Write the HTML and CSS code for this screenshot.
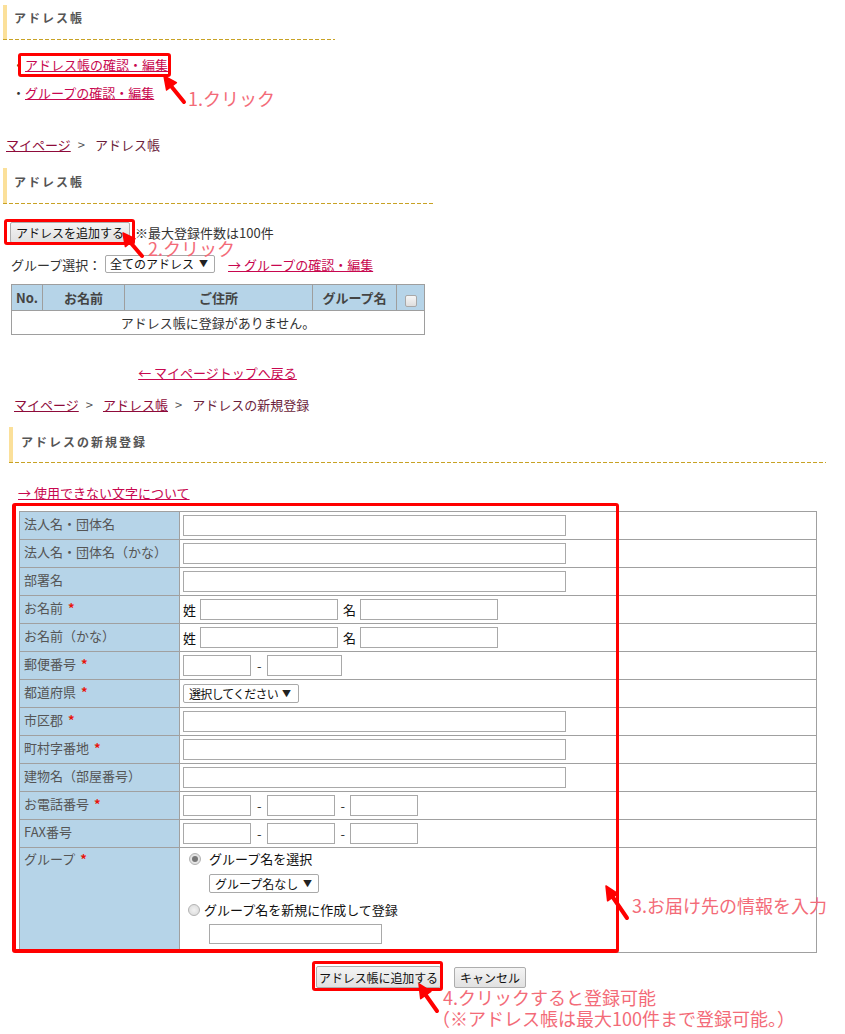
FILE: index.html
```html
<!DOCTYPE html>
<html lang="ja">
<head>
<meta charset="utf-8">
<title>アドレス帳</title>
<link rel="stylesheet" href="styles.css">
</head>
<body>
<div class="page">

  <section class="sec sec1">
    <div class="hd hd1"><h2>アドレス帳</h2></div>
    <ul class="menu">
      <li>・<a href="#">アドレス帳の確認・編集</a></li>
      <li>・<a href="#">グループの確認・編集</a></li>
    </ul>
    <p class="crumb crumb1"><a class="dk" href="#">マイページ</a><span class="sep">&gt;</span>アドレス帳</p>
  </section>

  <section class="sec sec2">
    <div class="hd hd2"><h2>アドレス帳</h2></div>
    <div class="addrow">
      <button class="btn btn-add" type="button">アドレスを追加する</button>
      <span class="note">※最大登録件数は100件</span>
    </div>
    <div class="grprow">
      <span class="grplabel">グループ選択：</span>
      <span class="sel sel-all"><span class="sel-txt">全てのアドレス</span><span class="sel-arr">▼</span></span>
      <a href="#" class="grplink">→ グループの確認・編集</a>
    </div>
    <table class="list">
      <colgroup><col class="c1"><col class="c2"><col class="c3"><col class="c4"><col class="c5"></colgroup>
      <thead>
        <tr><th class="th-no">No.</th><th>お名前</th><th>ご住所</th><th>グループ名</th><th><span class="chk"></span></th></tr>
      </thead>
      <tbody>
        <tr><td colspan="5" class="empty">アドレス帳に登録がありません。</td></tr>
      </tbody>
    </table>
    <p class="back"><a href="#">← マイページトップへ戻る</a></p>
  </section>

  <section class="sec sec3">
    <p class="crumb crumb2"><a class="dk" href="#">マイページ</a><span class="sep">&gt;</span><a class="dk" href="#">アドレス帳</a><span class="sep">&gt;</span>アドレスの新規登録</p>
    <div class="hd hd3"><h2>アドレスの新規登録</h2></div>
    <p class="charlink"><a href="#">→ 使用できない文字について</a></p>

    <table class="form">
      <colgroup><col class="lc"><col></colgroup>
      <tr><th>法人名・団体名</th><td><input class="in long" type="text"></td></tr>
      <tr><th>法人名・団体名（かな）</th><td><input class="in long" type="text"></td></tr>
      <tr><th>部署名</th><td><input class="in long" type="text"></td></tr>
      <tr><th>お名前 <span class="req">*</span></th><td><span class="lbl">姓</span><input class="in name" type="text"><span class="lbl lbl2">名</span><input class="in name" type="text"></td></tr>
      <tr><th>お名前（かな）</th><td><span class="lbl">姓</span><input class="in name" type="text"><span class="lbl lbl2">名</span><input class="in name" type="text"></td></tr>
      <tr><th>郵便番号 <span class="req">*</span></th><td><input class="in zip1" type="text"><span class="dash">-</span><input class="in zip2" type="text"></td></tr>
      <tr><th>都道府県 <span class="req">*</span></th><td><span class="sel sel-pref"><span class="sel-txt">選択してください</span><span class="sel-arr">▼</span></span></td></tr>
      <tr><th>市区郡 <span class="req">*</span></th><td><input class="in long" type="text"></td></tr>
      <tr><th>町村字番地 <span class="req">*</span></th><td><input class="in long" type="text"></td></tr>
      <tr><th>建物名（部屋番号）</th><td><input class="in long" type="text"></td></tr>
      <tr><th>お電話番号 <span class="req">*</span></th><td><input class="in tel" type="text"><span class="dash">-</span><input class="in tel" type="text"><span class="dash">-</span><input class="in tel" type="text"></td></tr>
      <tr><th>FAX番号</th><td><input class="in tel" type="text"><span class="dash">-</span><input class="in tel" type="text"><span class="dash">-</span><input class="in tel" type="text"></td></tr>
      <tr class="grp"><th>グループ <span class="req">*</span></th>
        <td>
          <div class="gline"><span class="radio on"></span>グループ名を選択</div>
          <span class="sel sel-grp"><span class="sel-txt">グループ名なし</span><span class="sel-arr">▼</span></span>
          <div class="gline gline2"><span class="radio"></span>グループ名を新規に作成して登録</div>
          <input class="in gname" type="text">
        </td>
      </tr>
    </table>

    <div class="actions">
      <button class="btn btn-submit" type="button">アドレス帳に追加する</button>
      <button class="btn btn-cancel" type="button">キャンセル</button>
    </div>
  </section>

  <!-- annotations overlay -->
  <div class="box box1"></div>
  <div class="box box2"></div>
  <div class="box box3"></div>
  <div class="box box4"></div>

  <span class="anno anno1">1.クリック</span>
  <span class="anno anno2">2.クリック</span>
  <span class="anno anno3">3.お届け先の情報を入力</span>
  <span class="anno anno4">4.クリックすると登録可能<br><span class="anno4b">（※アドレス帳は最大100件まで登録可能。）</span></span>

  <svg class="arrows" width="845" height="1034" viewBox="0 0 845 1034">
    <g fill="#f00" stroke="#f00" stroke-linecap="round" stroke-linejoin="round">
      <line x1="171" y1="86" x2="184" y2="102" stroke-width="4"/>
      <polygon points="164,76 166.6,90 176.4,82.6" stroke-width="1.5"/>
      <line x1="130" y1="242" x2="142" y2="256" stroke-width="4"/>
      <polygon points="123,233 125.4,246.6 135,238.6" stroke-width="1.5"/>
      <line x1="612" y1="896" x2="627" y2="918" stroke-width="4"/>
      <polygon points="606,886 607.6,900.8 617.8,893.6" stroke-width="1.5"/>
      <line x1="425" y1="994" x2="437" y2="1011" stroke-width="4"/>
      <polygon points="419,984 420.7,998.7 430.9,991.4" stroke-width="1.5"/>
    </g>
  </svg>
</div>
</body>
</html>
```

FILE: styles.css
```css
* { box-sizing: border-box; }

body {
  margin: 0;
  background: #fff;
  color: #333;
  font-family: "Noto Sans CJK JP", "Noto Sans", sans-serif;
  font-size: 13px;
}

.page {
  position: relative;
  width: 845px;
  height: 1034px;
  overflow: hidden;
}

a { color: #c8074f; text-decoration: underline; }
a.dk { color: #8e0b3a; }

p { margin: 0; }

/* headings */
.hd {
  padding-bottom: 1px;
  background: repeating-linear-gradient(to right, #c8a224 0 4px, transparent 4px 6px) left bottom / 100% 1px no-repeat;
}
.hd h2 {
  margin: 0;
  border-left: 4px solid #fbe09a;
  font-size: 12px;
  font-weight: bold;
  color: #555;
  letter-spacing: 2px;
  line-height: 20px;
  padding-left: 7px;
}
.hd1 { margin: 5px 0 0 3px; width: 332px; }
.hd1 h2 { padding-top: 3px; padding-bottom: 11px; }
.hd2 { margin: 13px 0 0 3px; width: 432px; }
.hd2 h2 { padding-top: 4px; padding-bottom: 11px; }
.hd3 { margin: 12px 0 0 9px; width: 817px; }
.hd3 h2 { padding: 5px 0 10px 8px; }

/* section 1 */
.menu {
  list-style: none;
  margin: 11px 0 0;
  padding: 0 0 0 12px;
  line-height: 28px;
  color: #333;
}
.crumb { line-height: 20px; color: #6b1d3a; }
.crumb .sep { color: #555; margin: 0 10px 0 7px; }
.crumb1 { margin: 28px 0 0 6px; }

/* section 2 */
.addrow {
  display: flex;
  align-items: center;
  height: 24px;
  margin-top: 16px;
  padding-left: 10px;
}
.btn {
  height: 21px;
  padding: 0 4px;
  border: 1px solid #adadad;
  border-radius: 2px;
  background: linear-gradient(#f4f4f4, #e1e1e1);
  font-family: "Noto Sans CJK JP", sans-serif;
  font-size: 12px;
  color: #111;
  line-height: 19px;
  white-space: nowrap;
}
.btn-add { width: 120px; }
.note { margin-left: 5px; }

.grprow {
  display: flex;
  align-items: center;
  height: 20px;
  margin-top: 10px;
  padding-left: 11px;
}
.grplabel { width: 94px; }
.sel {
  display: inline-flex;
  align-items: center;
  justify-content: space-between;
  height: 18px;
  padding: 0 6px 0 4px;
  border: 1px solid #a9a9a9;
  border-radius: 2px;
  background: #fff;
  color: #111;
  font-size: 12px;
  line-height: 16px;
  white-space: nowrap;
}
.sel-arr { font-size: 9px; color: #222; }
.sel-all { width: 110px; }
.grplink { margin-left: 13px; }

.list {
  margin: 10px 0 0 11px;
  width: 413px;
  border-collapse: collapse;
  table-layout: fixed;
}
.list .c1 { width: 31px; }
.list .c2 { width: 82px; }
.list .c3 { width: 188px; }
.list .c4 { width: 84px; }
.list .c5 { width: 28px; }
.list th, .list td { border: 1px solid #9e9e9e; padding: 0; }
.list th {
  height: 26px;
  background: #b6d4e8;
  color: #444;
  font-weight: bold;
  font-size: 13px;
  text-align: center;
}
.list .th-no { text-align: left; padding-left: 4px; }
.chk {
  display: inline-block;
  width: 12px;
  height: 12px;
  margin-top: 3px;
  border: 1px solid #a8a8a8;
  border-radius: 2px;
  background: linear-gradient(#f6f6f6, #dedede);
  vertical-align: middle;
}
.list td.empty { height: 24px; text-align: center; color: #333; }

.back { margin-top: 28px; width: 413px; margin-left: 11px; text-align: center; line-height: 20px; }

/* section 3 */
.crumb2 { margin: 12px 0 0 14px; }
.charlink { margin: 20px 0 0 18px; line-height: 20px; }

.form {
  margin: 8px 0 0 19px;
  width: 798px;
  border-collapse: collapse;
  table-layout: fixed;
}
.form .lc { width: 160px; }
.form th, .form td {
  border: 1px solid #a0a0a0;
  height: 28px;
  vertical-align: top;
  text-align: left;
}
.form th {
  background: #b6d4e8;
  color: #555;
  font-weight: normal;
  padding: 3px 4px 0;
  line-height: 18px;
}
.form td {
  padding: 3px 3px 0;
  line-height: 21px;
  white-space: nowrap;
}
.req { color: #e8140a; font-weight: bold; margin-left: 2px; }

.in {
  height: 21px;
  border: 1px solid #a9a9a9;
  padding: 0 3px;
  margin: 0;
  vertical-align: top;
  font-size: 13px;
  background: #fff;
}
.long { width: 383px; }
.name { width: 138px; }
.zip1, .tel { width: 68px; }
.zip2 { width: 75px; }
.lbl { display: inline-block; margin-right: 4px; color: #111; }
.lbl2 { margin-left: 5px; margin-right: 4px; }
.dash { display: inline-block; margin: 0 5px 0 6px; color: #333; vertical-align: top; }

.sel-pref { width: 116px; height: 19px; margin-top: 1px; vertical-align: top; padding: 0 7px 0 5px; }
.sel-pref .sel-txt { letter-spacing: -0.8px; }

.form tr.grp th { padding-top: 2px; }
.form tr.grp td { padding: 2px 0 8px 9px; line-height: 18px; }
.gline { display: flex; align-items: center; height: 18px; color: #111; }
.gline2 { margin-top: 8px; }
.radio {
  display: inline-block;
  width: 12px;
  height: 12px;
  margin-right: 8px;
  border: 1px solid #b4b4b4;
  border-radius: 50%;
  background: radial-gradient(circle, #f2f2f2 0, #d8d8d8 100%);
  position: relative;
}
.radio.on::after {
  content: "";
  position: absolute;
  left: 2px; top: 2px;
  width: 6px; height: 6px;
  border-radius: 50%;
  background: #777;
}
.gline2 .radio { margin-right: 4px; margin-left: -1px; }
.sel-grp { display: flex; width: 110px; height: 19px; margin: 6px 0 0 20px; padding-left: 5px; }
.gname { display: block; width: 173px; height: 20px; margin: 5px 0 0 20px; }

.actions {
  display: flex;
  justify-content: center;
  gap: 13px;
  width: 798px;
  margin: 13px 0 0 22px;
}
.btn-submit { width: 125px; height: 22px; padding: 0 1px; letter-spacing: -0.1px; }
.btn-cancel { width: 72px; height: 21px; margin-top: 1px; }

/* annotation overlay */
.box {
  position: absolute;
  border: 3px solid #ff0000;
  border-radius: 3px;
}
.box1 { left: 18px; top: 53px; width: 153px; height: 24px; }
.box2 { left: 4px; top: 219px; width: 131px; height: 26px; }
.box3 { left: 12px; top: 503px; width: 607px; height: 450px; border-width: 3px 3px 4px 4px; }
.box4 { left: 312px; top: 961px; width: 131px; height: 30px; }

.anno {
  position: absolute;
  color: #f36b78;
  font-size: 18px;
  line-height: 21px;
  white-space: nowrap;
}
.anno1 { left: 188px; top: 88px; }
.anno2 { left: 148px; top: 238px; }
.anno3 { left: 632px; top: 895px; }
.anno4 { left: 443px; top: 987px; }
.anno4b { display: inline-block; margin-left: -11px; }

.arrows { position: absolute; left: 0; top: 0; pointer-events: none; }
```
